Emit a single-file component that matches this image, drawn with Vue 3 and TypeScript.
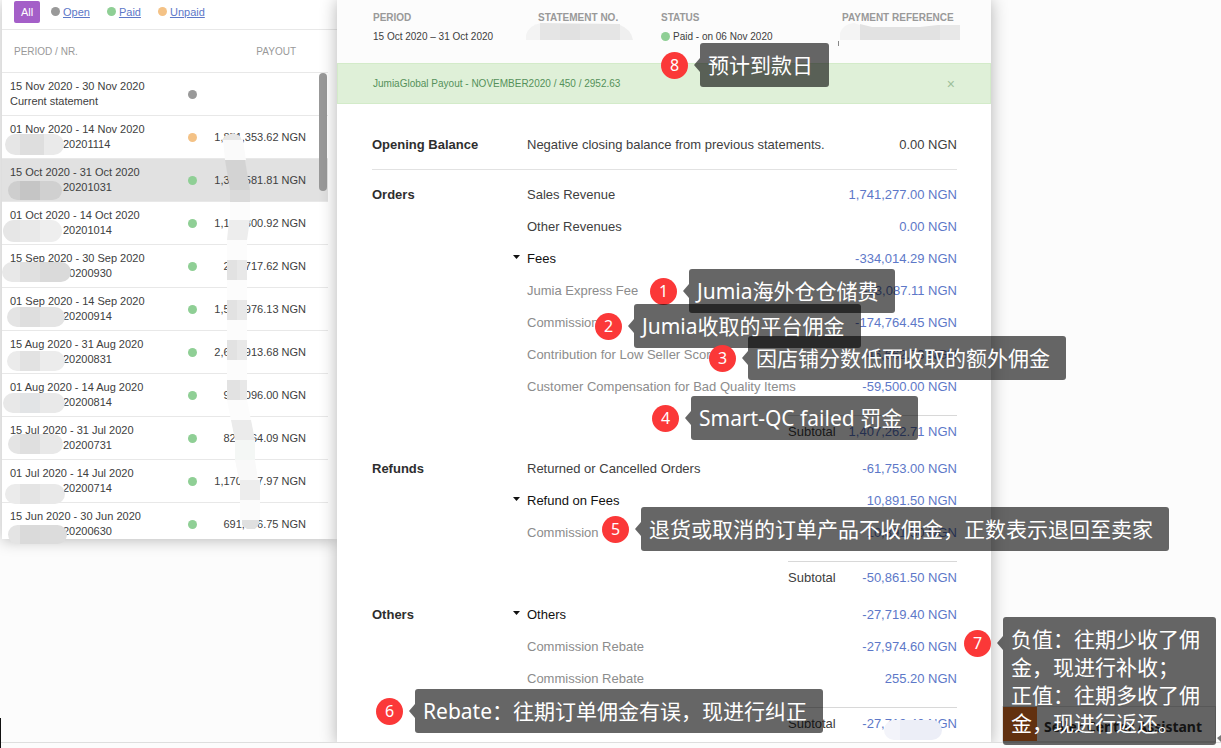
<script setup lang="ts">
import { ref } from 'vue'

type Status = 'open' | 'paid' | 'unpaid'

interface Statement {
  period: string
  nr: string
  masked: boolean
  status: Status
  payout: string
}

interface Line {
  label: string
  amount: string
  kind: 'item' | 'group' | 'child'
}

interface Section {
  title: string
  lines: Line[]
  subtotal: string
}

interface Note {
  n: number
  x: number
  y: number
  lines: string[]
  tall?: boolean
}

interface Smear {
  x: number
  y: number
  w: number
  h: number
  tiles: [string, number][]
}

const statements: Statement[] = [
  { period: '15 Nov 2020 - 30 Nov 2020', nr: 'Current statement', masked: false, status: 'open', payout: '' },
  { period: '01 Nov 2020 - 14 Nov 2020', nr: '20201114', masked: true, status: 'unpaid', payout: '1,851,353.62 NGN' },
  { period: '15 Oct 2020 - 31 Oct 2020', nr: '20201031', masked: true, status: 'paid', payout: '1,300,581.81 NGN' },
  { period: '01 Oct 2020 - 14 Oct 2020', nr: '20201014', masked: true, status: 'paid', payout: '1,100,300.92 NGN' },
  { period: '15 Sep 2020 - 30 Sep 2020', nr: '20200930', masked: true, status: 'paid', payout: '200,717.62 NGN' },
  { period: '01 Sep 2020 - 14 Sep 2020', nr: '20200914', masked: true, status: 'paid', payout: '1,500,976.13 NGN' },
  { period: '15 Aug 2020 - 31 Aug 2020', nr: '20200831', masked: true, status: 'paid', payout: '2,600,913.68 NGN' },
  { period: '01 Aug 2020 - 14 Aug 2020', nr: '20200814', masked: true, status: 'paid', payout: '900,096.00 NGN' },
  { period: '15 Jul 2020 - 31 Jul 2020', nr: '20200731', masked: true, status: 'paid', payout: '820,064.09 NGN' },
  { period: '01 Jul 2020 - 14 Jul 2020', nr: '20200714', masked: true, status: 'paid', payout: '1,170,007.97 NGN' },
  { period: '15 Jun 2020 - 30 Jun 2020', nr: '20200630', masked: true, status: 'paid', payout: '691,006.75 NGN' },
]
const selected = ref(2)
const bannerOpen = ref(true)

const sections: Section[] = [
  {
    title: 'Orders',
    subtotal: '1,407,262.71 NGN',
    lines: [
      { label: 'Sales Revenue', amount: '1,741,277.00 NGN', kind: 'item' },
      { label: 'Other Revenues', amount: '0.00 NGN', kind: 'item' },
      { label: 'Fees', amount: '-334,014.29 NGN', kind: 'group' },
      { label: 'Jumia Express Fee', amount: '-53,087.11 NGN', kind: 'child' },
      { label: 'Commission', amount: '-174,764.45 NGN', kind: 'child' },
      { label: 'Contribution for Low Seller Score', amount: '-46,662.73 NGN', kind: 'child' },
      { label: 'Customer Compensation for Bad Quality Items', amount: '-59,500.00 NGN', kind: 'child' },
    ],
  },
  {
    title: 'Refunds',
    subtotal: '-50,861.50 NGN',
    lines: [
      { label: 'Returned or Cancelled Orders', amount: '-61,753.00 NGN', kind: 'item' },
      { label: 'Refund on Fees', amount: '10,891.50 NGN', kind: 'group' },
      { label: 'Commission', amount: '10,891.50 NGN', kind: 'child' },
    ],
  },
  {
    title: 'Others',
    subtotal: '-27,719.40 NGN',
    lines: [
      { label: 'Others', amount: '-27,719.40 NGN', kind: 'group' },
      { label: 'Commission Rebate', amount: '-27,974.60 NGN', kind: 'child' },
      { label: 'Commission Rebate', amount: '255.20 NGN', kind: 'child' },
    ],
  },
]

const notes: Note[] = [
  { n: 8, x: 661, y: 43, lines: ['预计到款日'] },
  { n: 1, x: 650, y: 269, lines: ['Jumia海外仓仓储费'] },
  { n: 2, x: 595, y: 304, lines: ['Jumia收取的平台佣金'] },
  { n: 3, x: 709, y: 336, lines: ['因店铺分数低而收取的额外佣金'] },
  { n: 4, x: 652, y: 396, lines: ['Smart-QC failed 罚金'] },
  { n: 5, x: 602, y: 507, lines: ['退货或取消的订单产品不收佣金，正数表示退回至卖家'] },
  { n: 6, x: 376, y: 689, lines: ['Rebate：往期订单佣金有误，现进行纠正'] },
  { n: 7, x: 964, y: 617, lines: ['负值：往期少收了佣', '金，现进行补收；', '正值：往期多收了佣', '金，现进行返还。'], tall: true },
]

const smears: Smear[] = [
  { x: 5, y: 134, w: 59, h: 21, tiles: [['#e6e6e6', 15], ['#dedede', 24], ['#eaeaea', 20]] },
  { x: 8, y: 181, w: 54, h: 19, tiles: [['#cecece', 12], ['#c5c5c5', 20], ['#d0d0d0', 22]] },
  { x: 3, y: 220, w: 59, h: 22, tiles: [['#e6e6e6', 17], ['#e9e9e9', 20], ['#eeeeee', 22]] },
  { x: 2, y: 262, w: 69, h: 20, tiles: [['#e8e8e8', 18], ['#e0e0e0', 20], ['#dadada', 31]] },
  { x: 7, y: 307, w: 58, h: 20, tiles: [['#e4e4e4', 13], ['#dedede', 20], ['#e4e4e4', 25]] },
  { x: 7, y: 351, w: 58, h: 20, tiles: [['#ebebeb', 13], ['#e2e2e2', 20], ['#ececec', 25]] },
  { x: 3, y: 393, w: 62, h: 20, tiles: [['#e8e8e8', 17], ['#e2e4e6', 20], ['#e9e9e9', 25]] },
  { x: 8, y: 434, w: 55, h: 20, tiles: [['#e4e4e4', 12], ['#dfdfdf', 20], ['#e8e8e8', 23]] },
  { x: 5, y: 484, w: 60, h: 20, tiles: [['#ebebeb', 15], ['#e4e4e4', 20], ['#e9e9e9', 25]] },
  { x: 8, y: 525, w: 59, h: 19, tiles: [['#e4e4e4', 12], ['#dadada', 20], ['#dcdcdc', 27]] },
  { x: 884, y: 720, w: 58, h: 20, tiles: [['#f3f4fa', 16], ['#eceef7', 42]] },
]
</script>

<template>
  <div class="page">
    <div class="columns">
      <aside class="sidebar">
        <nav class="filters">
          <button type="button" class="all">All</button>
          <span class="filter"><i class="dot open"></i><a href="#open">Open</a></span>
          <span class="filter"><i class="dot paid"></i><a href="#paid">Paid</a></span>
          <span class="filter"><i class="dot unpaid"></i><a href="#unpaid">Unpaid</a></span>
        </nav>
        <table class="statements">
          <thead>
            <tr>
              <th class="c-period">PERIOD / NR.</th>
              <th class="c-status"></th>
              <th class="c-payout">PAYOUT</th>
            </tr>
          </thead>
          <tbody>
            <tr v-for="(s, i) in statements" :key="s.period" :class="{ selected: i === selected }" @click="selected = i">
              <td class="c-period">
                <div>{{ s.period }}</div>
                <div :class="{ masked: s.masked }">{{ s.nr }}</div>
              </td>
              <td class="c-status"><i class="dot" :class="s.status"></i></td>
              <td class="c-payout">{{ s.payout }}</td>
            </tr>
          </tbody>
        </table>
        <div class="scrollbar"></div>
      </aside>

      <main class="detail">
        <dl class="summary">
          <div><dt>PERIOD</dt><dd>15 Oct 2020 – 31 Oct 2020</dd></div>
          <div><dt>STATEMENT NO.</dt><dd></dd></div>
          <div><dt>STATUS</dt><dd class="state"><i class="dot paid"></i>Paid - on 06 Nov 2020</dd></div>
          <div><dt>PAYMENT REFERENCE</dt><dd></dd></div>
        </dl>
        <div v-if="bannerOpen" class="banner">
          <span>JumiaGlobal Payout - NOVEMBER2020 / 450 / 2952.63</span>
          <button type="button" aria-label="Close" @click="bannerOpen = false">×</button>
        </div>
        <div class="ledger-wrap">
          <table class="ledger">
            <tbody class="opening">
              <tr>
                <th class="title" scope="row">Opening Balance</th>
                <td class="label"><span class="slot"></span>Negative closing balance from previous statements.</td>
                <td class="amount">0.00 NGN</td>
              </tr>
            </tbody>
            <tbody v-for="sec in sections" :key="sec.title" class="section">
              <tr v-for="(l, i) in sec.lines" :key="i">
                <th class="title" scope="row">{{ i === 0 ? sec.title : '' }}</th>
                <td class="label" :class="l.kind">
                  <button v-if="l.kind === 'group'" type="button" class="toggle">
                    <span class="slot"><svg width="7" height="4" viewBox="0 0 7 4"><path d="M0 0h7L3.500 4z" fill="#111" /></svg></span>{{ l.label }}
                  </button>
                  <template v-else><span class="slot"></span>{{ l.label }}</template>
                </td>
                <td class="amount"><a href="#amount">{{ l.amount }}</a></td>
              </tr>
              <tr class="sub">
                <td colspan="3">
                  <div class="subtotal"><span>Subtotal</span><a href="#subtotal">{{ sec.subtotal }}</a></div>
                </td>
              </tr>
            </tbody>
          </table>
        </div>
      </main>
    </div>
    <footer class="edge"></footer>

    <button type="button" class="assistant">
      <span class="mark"></span><span class="name">Seller Center Assistant</span>
    </button>

    <div v-for="(s, i) in smears" :key="'s' + i" class="smear" :style="{ left: s.x + 'px', top: s.y + 'px', width: s.w + 'px', height: s.h + 'px' }">
      <span v-for="(t, j) in s.tiles" :key="j" :style="{ background: t[0], width: t[1] + 'px' }"></span>
    </div>
    <svg class="strokes" width="1221" height="748" viewBox="0 0 1221 748" aria-hidden="true">
      <path d="M222 141l3-5 8-3 7 3 2 5z" fill="#e6e6e6" />
      <path d="M223 140h20l3 20h-21z" fill="#fafafa" />
      <path d="M225 160h20l5 30h-20z" fill="#d3d3d3" />
      <path d="M230 190h20v12h-20z" fill="#dadada" />
      <path d="M230 202h20v18h-20z" fill="#fcfcfc" />
      <path d="M229 220h21l-3 20h-20z" fill="#ededed" />
      <path d="M227 240h20v160h-20z" fill="#fcfcfc" />
      <g fill="#e2e2e2">
        <path d="M227 260h10v20h-10zM227 300h10v20h-10zM227 340h10v20h-10zM227 380h13v20h-13z" />
      </g>
      <g fill="#e8e8e8">
        <path d="M237 260h10v20h-10zM237 300h10v20h-10zM237 340h10v20h-10zM240 380h7v20h-7z" />
      </g>
      <path d="M227 400h20l4 20h-20z" fill="#fcfcfc" />
      <path d="M231 420h20l4 20h-20z" fill="#ebebeb" />
      <path d="M235 440h20v20h-20z" fill="#f4f7f5" />
      <path d="M235 460h20l3 20h-19z" fill="#f9f9f9" />
      <path d="M240 480h20v20h-20z" fill="#ededed" />
      <path d="M240 500h20v20h-20z" fill="#fbfbfb" />
      <path d="M242 520h17v4l-4 5h-8l-5-4z" fill="#e0e0e0" />

      <path d="M526 40v-5q3-10 15-12v17z" fill="#f3f3f3" />
      <path d="M540 23l80 1v16h-80z" fill="#e5e5e5" />
      <path d="M560 24h20v16h-20z" fill="#e1e1e1" />
      <path d="M620 25q11 4 13 15h-13z" fill="#efefef" />
      <path d="M840 40v-7q3-9 14-10l6 2v15z" fill="#f4f4f4" />
      <path d="M860 24l12 3h48l18-2h2v15h-80z" fill="#e2e2e2" />
      <path d="M940 25h20v15h-20z" fill="#e8e8e8" />
      <path d="M838 41h1v5h-1z" fill="#888" />
      <path d="M0 718h1v30h-1z" fill="#111" />
      <path d="M1217 738l4-3v7z" fill="#777" />
    </svg>

    <div v-for="m in notes" :key="m.n" class="note" :class="{ tall: m.tall }" :style="{ left: m.x + 'px', top: m.y + 'px' }">
      <span class="num">{{ m.n }}</span>
      <svg class="tip" width="6" height="14" viewBox="0 0 6 14"><path d="M6 0v14L0 7z" /></svg>
      <div class="bubble"><div v-for="t in m.lines" :key="t">{{ t }}</div></div>
    </div>
  </div>
</template>

<style>
body {
  margin: 0;
  background: #fcfcfc;
}
</style>

<style scoped>
.page {
  position: relative;
  display: flex;
  flex-direction: column;
  height: 100vh;
  overflow: hidden;
  background: #fcfcfc;
  color: #404040;
  font-family: "Liberation Sans", Arial, sans-serif;
  font-size: 13px;
}
button {
  border: 0;
  padding: 0;
  background: none;
  color: inherit;
  font: inherit;
  cursor: pointer;
}
.columns {
  flex: 1;
  min-height: 0;
  display: grid;
  grid-template-columns: 337fr 654fr 230fr;
  align-items: start;
  overflow: hidden;
}
.edge {
  flex: none;
  height: 5px;
  border-top: 1px solid #dedede;
}
.dot {
  display: inline-block;
  flex: none;
  width: 9px;
  height: 9px;
  border-radius: 50%;
}
.dot.open { background: #999; }
.dot.paid { background: #8fcf95; }
.dot.unpaid { background: #f4c286; }

.sidebar {
  position: relative;
  margin-left: 2px;
  background: #fff;
  font-size: 11px;
  box-shadow: 0 2px 14px rgba(0, 0, 0, 0.25);
}
.filters {
  display: flex;
  align-items: center;
  height: 30px;
  box-sizing: border-box;
  padding: 0 0 6px 12px;
  border-bottom: 1px solid #e8e8e8;
}
.all {
  width: 26px;
  height: 22px;
  margin-right: 11px;
  border-radius: 2px;
  background: #a45fc8;
  color: #fff;
}
.filter {
  display: flex;
  align-items: center;
  gap: 3px;
  margin-right: 17px;
}
a {
  color: #5d78c8;
}
.statements {
  width: calc(100% - 9px);
  border-collapse: collapse;
  table-layout: fixed;
  line-height: 15px;
}
.statements th {
  height: 42px;
  padding: 0;
  border-bottom: 1px solid #e8e8e8;
  color: #999;
  font-size: 10px;
  font-weight: normal;
}
.statements td {
  height: 30px;
  padding: 6px 0;
  border-bottom: 1px solid #e8e8e8;
  vertical-align: middle;
}
.statements tbody tr:last-child td {
  padding-bottom: 0;
  border-bottom: 0;
}
.statements .selected {
  background: #e1e1e1;
}
.statements .c-period {
  padding-left: 8px;
  text-align: left;
  white-space: nowrap;
}
.statements th.c-period { padding-left: 12px; }
.c-status {
  width: 34px;
  text-align: center;
  line-height: 0;
}
.statements .c-payout {
  width: 119px;
  padding-right: 22px;
  box-sizing: border-box;
  text-align: right;
}
.statements th.c-payout { padding-right: 32px; }
.masked { padding-left: 53px; }
.scrollbar {
  position: absolute;
  top: 73px;
  right: 10px;
  width: 8px;
  height: 118px;
  border-radius: 4px;
  background: #999;
}

.detail {
  position: relative;
  background: #fff;
  box-shadow: 0 0 16px rgba(0, 0, 0, 0.3);
}
.summary {
  display: grid;
  grid-template-columns: 165px 123px 181px 1fr;
  height: 63px;
  margin: 0;
  padding: 10px 20px 0 36px;
  box-sizing: border-box;
  background: #fcfcfc;
  font-size: 10px;
  line-height: 15px;
}
.summary dt {
  color: #999;
  font-weight: bold;
}
.summary dd {
  margin: 4px 0 0;
}
.state {
  display: flex;
  align-items: center;
  gap: 3px;
}
.banner {
  display: flex;
  align-items: center;
  justify-content: space-between;
  height: 41px;
  box-sizing: border-box;
  padding: 0 35px;
  border: 1px solid #d3ebc9;
  background: #dff0d8;
  color: #55905a;
  font-size: 10px;
}
.banner button {
  color: #9dbf9a;
  font-size: 14px;
}
.ledger-wrap {
  padding: 17px 34px 0 35px;
}
.ledger {
  width: 100%;
  border-collapse: collapse;
  line-height: 16px;
}
.ledger th,
.ledger td {
  height: 32px;
  padding: 0;
}
.ledger .title {
  width: 141px;
  color: #2e2e2e;
  text-align: left;
}
.ledger .label { white-space: nowrap; }
.ledger .label.child { color: #8c8c8c; }
.ledger .amount { text-align: right; }
.ledger a { text-decoration: none; }
.opening th,
.opening td {
  height: 48px;
  border-bottom: 1px solid #e2e2e2;
}
.opening + .section::before {
  content: "";
  display: block;
  height: 9px;
}
.slot {
  display: inline-flex;
  width: 14px;
  height: 4px;
  vertical-align: 4px;
}
.toggle { color: #111; }
.ledger .sub td { height: 50px; }
.subtotal {
  display: flex;
  justify-content: space-between;
  width: 169px;
  margin: 12px 0 0 auto;
  padding: 8px 0 13px;
  border-top: 1px solid #d8d8d8;
}

.assistant {
  position: absolute;
  right: 5px;
  bottom: 6px;
  display: flex;
  align-items: center;
  min-width: 214px;
  height: 36px;
  box-sizing: border-box;
  border: 1px solid #ddd;
  background: #f9f9f9;
  color: #333;
  font: bold 14px "Noto Sans", sans-serif;
}
.mark {
  width: 34px;
  height: 34px;
  background: #f47a28;
}
.name { padding: 4px 7px 0; }

.smear {
  position: absolute;
  display: flex;
  overflow: hidden;
  border-radius: 11px;
}
.strokes {
  position: absolute;
  top: 0;
  left: 0;
}

.note {
  position: absolute;
  display: flex;
  align-items: flex-start;
  color: #fff;
  font-family: "Noto Sans", "Noto Sans CJK SC", sans-serif;
  font-size: 21px;
  white-space: nowrap;
}
.num {
  width: 27px;
  height: 27px;
  margin: 9px 6px 0 0;
  border-radius: 50%;
  background: #fb3838;
  font-size: 16px;
  line-height: 26px;
  text-align: center;
}
.tip {
  margin-top: 15px;
  fill: rgba(0, 0, 0, 0.6);
}
.bubble {
  padding: 8px 16px 8px 8px;
  border-radius: 3px;
  background: rgba(0, 0, 0, 0.6);
  line-height: 28px;
}
.tall .num { margin-top: 13px; }
.tall .tip { margin-top: 19px; }
</style>
